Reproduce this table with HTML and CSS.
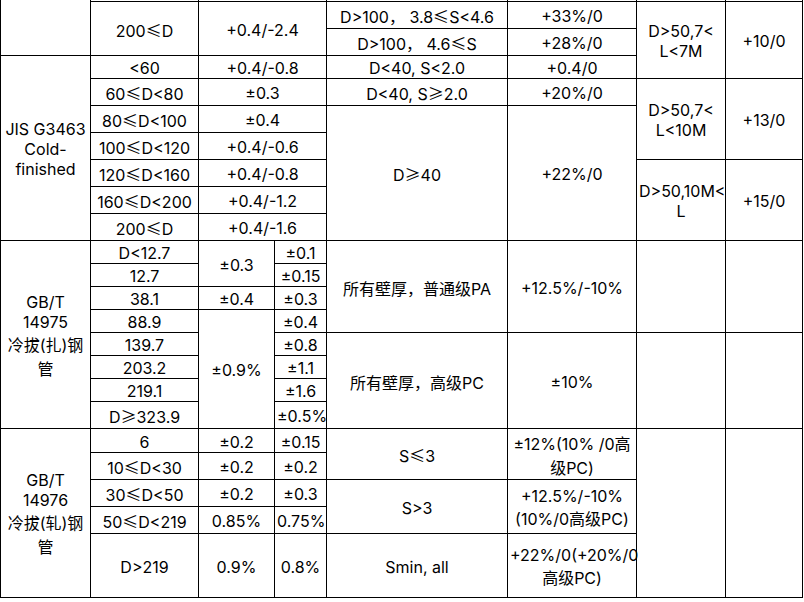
FILE: index.html
```html
<!DOCTYPE html>
<html lang="zh">
<head>
<meta charset="utf-8">
<title>钢管公差表</title>
<link rel="stylesheet" href="styles.css">
</head>
<body>
<table class="spec">
  <colgroup>
    <col class="w0"><col class="w1"><col class="w2"><col class="w3"><col class="w4"><col class="w5"><col class="w6"><col class="w7">
  </colgroup>
  <tbody>
    <tr class="r0">
      <td rowspan="3"></td><td></td><td colspan="2"></td><td></td><td></td><td></td><td></td>
    </tr>
    <tr class="h27">
      <td rowspan="2">200<span class="cj">≤</span>D</td>
      <td rowspan="2" colspan="2">+0.4/-2.4</td>
      <td>D&gt;100<span class="cj">，</span> 3.8<span class="cj">≤</span>S&lt;4.6</td>
      <td>+33%/0</td>
      <td rowspan="3">D&gt;50,7&lt;<br>L&lt;7M</td>
      <td rowspan="3">+10/0</td>
    </tr>
    <tr class="h27">
      <td>D&gt;100<span class="cj">，</span> 4.6<span class="cj">≤</span>S</td>
      <td>+28%/0</td>
    </tr>
    <tr class="h23">
      <td rowspan="7">JIS G3463<br>Cold-<br>finished</td>
      <td>&lt;60</td>
      <td colspan="2">+0.4/-0.8</td>
      <td>D&lt;40, S&lt;2.0</td>
      <td>+0.4/0</td>
    </tr>
    <tr class="h27">
      <td>60<span class="cj">≤</span>D&lt;80</td>
      <td colspan="2">±0.3</td>
      <td>D&lt;40, S<span class="cj">≥</span>2.0</td>
      <td>+20%/0</td>
      <td rowspan="3">D&gt;50,7&lt;<br>L&lt;10M</td>
      <td rowspan="3">+13/0</td>
    </tr>
    <tr class="h27">
      <td>80<span class="cj">≤</span>D&lt;100</td>
      <td colspan="2">±0.4</td>
      <td rowspan="5">D<span class="cj">≥</span>40</td>
      <td rowspan="5">+22%/0</td>
    </tr>
    <tr class="h27">
      <td>100<span class="cj">≤</span>D&lt;120</td>
      <td colspan="2">+0.4/-0.6</td>
    </tr>
    <tr class="h27">
      <td>120<span class="cj">≤</span>D&lt;160</td>
      <td colspan="2">+0.4/-0.8</td>
      <td rowspan="3">D&gt;50,10M&lt;<br>L</td>
      <td rowspan="3">+15/0</td>
    </tr>
    <tr class="h27">
      <td>160<span class="cj">≤</span>D&lt;200</td>
      <td colspan="2">+0.4/-1.2</td>
    </tr>
    <tr class="h27">
      <td>200<span class="cj">≤</span>D</td>
      <td colspan="2">+0.4/-1.6</td>
    </tr>
    <tr class="h23">
      <td rowspan="8">GB/T<br>14975<br>冷拔(扎)钢<br>管</td>
      <td>D&lt;12.7</td>
      <td rowspan="2">±0.3</td>
      <td>±0.1</td>
      <td rowspan="4">所有壁厚，普通级PA</td>
      <td rowspan="4">+12.5%/-10%</td>
      <td rowspan="4"></td>
      <td rowspan="4"></td>
    </tr>
    <tr class="h23">
      <td>12.7</td>
      <td>±0.15</td>
    </tr>
    <tr class="h23">
      <td>38.1</td>
      <td>±0.4</td>
      <td>±0.3</td>
    </tr>
    <tr class="h23">
      <td>88.9</td>
      <td rowspan="5">±0.9%</td>
      <td>±0.4</td>
    </tr>
    <tr class="h23">
      <td>139.7</td>
      <td>±0.8</td>
      <td rowspan="4">所有壁厚，高级PC</td>
      <td rowspan="4">±10%</td>
      <td rowspan="4"></td>
      <td rowspan="4"></td>
    </tr>
    <tr class="h23">
      <td>203.2</td>
      <td>±1.1</td>
    </tr>
    <tr class="h23">
      <td>219.1</td>
      <td>±1.6</td>
    </tr>
    <tr class="h27">
      <td>D<span class="cj">≥</span>323.9</td>
      <td>±0.5%</td>
    </tr>
    <tr class="h24">
      <td rowspan="5">GB/T<br>14976<br>冷拔(轧)钢<br>管</td>
      <td>6</td>
      <td>±0.2</td>
      <td>±0.15</td>
      <td rowspan="2">S<span class="cj">≤</span>3</td>
      <td rowspan="2">±12%(10% /0高<br>级PC)</td>
      <td rowspan="5"></td>
      <td rowspan="5"></td>
    </tr>
    <tr class="h27">
      <td>10<span class="cj">≤</span>D&lt;30</td>
      <td>±0.2</td>
      <td>±0.2</td>
    </tr>
    <tr class="h27">
      <td>30<span class="cj">≤</span>D&lt;50</td>
      <td>±0.2</td>
      <td>±0.3</td>
      <td rowspan="2">S&gt;3</td>
      <td rowspan="2">+12.5%/-10%<br>(10%/0高级PC)</td>
    </tr>
    <tr class="h27">
      <td>50<span class="cj">≤</span>D&lt;219</td>
      <td>0.85%</td>
      <td>0.75%</td>
    </tr>
    <tr class="h64">
      <td>D&gt;219</td>
      <td>0.9%</td>
      <td>0.8%</td>
      <td>Smin, all</td>
      <td>+22%/0(+20%/0<br>高级PC)</td>
    </tr>
  </tbody>
</table>
</body>
</html>
```

FILE: styles.css
```css
html, body {
  margin: 0;
  padding: 0;
  background: #ffffff;
}

body {
  font-family: Inter, "Noto Sans CJK SC", sans-serif;
  font-size: 16px;
  color: #000000;
}

.spec {
  border-collapse: collapse;
  table-layout: fixed;
  width: 802px;
}

.spec td {
  border: 1px solid #000000;
  text-align: center;
  vertical-align: middle;
  padding: 2px 2px 0;
  white-space: nowrap;
}

.w0 { width: 90px; }
.w1 { width: 108px; }
.w2 { width: 76px; }
.w3 { width: 52px; }
.w4 { width: 181px; }
.w5 { width: 129px; }
.w6 { width: 89px; }
.w7 { width: 77px; }

.cj {
  font-family: "Noto Sans CJK SC", sans-serif;
}

.r0 td {
  border-top: none;
  height: 1px;
  padding: 0;
}

.h23 { height: 23px; }
.h24 { height: 24px; }
.h27 { height: 27px; }
.h64 { height: 64px; }
```
